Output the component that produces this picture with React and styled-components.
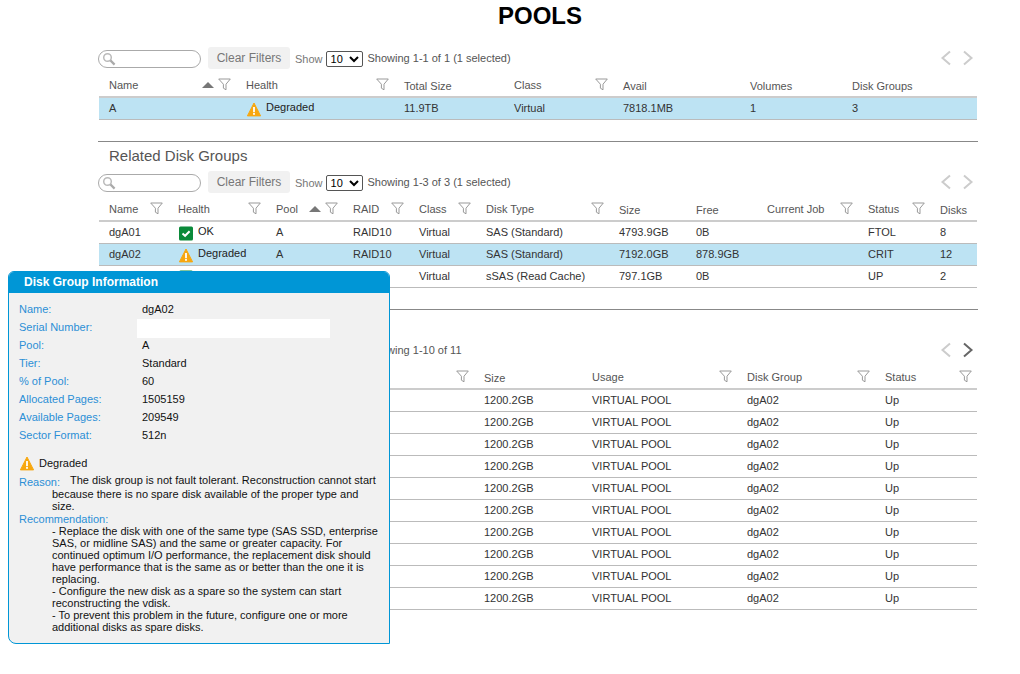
import React from 'react';
import styled, { createGlobalStyle } from 'styled-components';

const GlobalStyle = createGlobalStyle`
	html, body {
		margin: 0;
		padding: 0;
		background: #fff;
		font-family: "Liberation Sans", Arial, sans-serif;
		font-size: 11px;
	}
`;

const Page = styled.div`
	position: relative;
	width: 1020px;
	height: 674px;
	overflow: hidden;
`;

const Title = styled.h1`
	margin: 0;
	height: 32px;
	line-height: 32px;
	font-size: 24px;
	font-weight: bold;
	text-align: center;
	color: #000;
	margin-left: 60px;
`;

const Content = styled.div`
	margin-left: 98px;
	width: 880px;
	padding-top: 15px;
`;

const Section = styled.section`
	margin-top: 21px;
	border-top: 1px solid #888;
`;

const Heading = styled.h2`
	margin: 0;
	height: 29px;
	padding-left: 11px;
	line-height: 27px;
	font-size: 15px;
	font-weight: normal;
	color: #555;
`;

const Toolbar = styled.div`
	display: flex;
	align-items: center;
	height: 22px;
	margin-bottom: 6px;
	color: #555;
`;

const SearchBox = styled.div`
	display: flex;
	align-items: center;
	box-sizing: border-box;
	width: 103px;
	height: 18px;
	padding-left: 3px;
	margin-top: 2px;
	border: 1px solid #aaa;
	border-radius: 9px;
`;

const ClearButton = styled.button`
	height: 22px;
	width: 82px;
	margin-left: 7px;
	padding: 0;
	border: 0;
	border-radius: 3px;
	background: #f1f1f1;
	color: #777;
	font-family: inherit;
	font-size: 12px;
`;

const ShowLabel = styled.span`
	margin: 2px 3px 0 5px;
	color: #777;
`;

const PageSelect = styled.select`
	width: 37px;
	height: 16px;
	padding: 0;
	margin-top: 1px;
	border: 1px solid #555;
	border-radius: 2px;
	background: #fff;
	color: #000;
	font-family: inherit;
	font-size: 11px;
`;

const Summary = styled.span`
	margin-left: 5px;
	margin-bottom: 1px;
`;

const Pager = styled.div`
	display: flex;
	gap: 8px;
	margin-left: auto;
	margin-right: 3px;
`;

const Row = styled.div`
	display: grid;
	grid-template-columns: ${(p) => p.$cols};
	margin: 0 1px;
	height: 22px;
	box-sizing: border-box;
	border-bottom: 1px solid #bbb;
	background: ${(p) => (p.$selected ? '#bde3f3' : 'transparent')};
	color: #333;
`;

const HeaderRow = styled(Row)`
	height: 23px;
	border-bottom: 2px solid #ccc;
	color: #555;
`;

const Cell = styled.div`
	display: flex;
	align-items: center;
	padding-left: 10px;
	padding-bottom: 2px;
	white-space: nowrap;
	overflow: hidden;
`;

const HeadCell = styled(Cell)`
	padding-right: 5px;
	padding-bottom: ${(p) => (p.$low ? 0 : 2)}px;
`;

const HeadTools = styled.span`
	display: flex;
	align-items: center;
	gap: 4px;
	margin-left: auto;
`;

const SortArrow = styled.span`
	width: 0;
	height: 0;
	border-left: 6px solid transparent;
	border-right: 6px solid transparent;
	border-bottom: 6px solid #777;
`;

const HealthBox = styled.span`
	display: flex;
	align-items: center;
	gap: 4px;
	padding-top: 3px;
`;

const HealthText = styled.span`
	margin-bottom: 4px;
	color: #222;
`;

const Popup = styled.div`
	position: absolute;
	left: 8px;
	top: 271px;
	box-sizing: border-box;
	width: 382px;
	height: 373px;
	background: #f1f1f1;
	border: 1px solid #0096d6;
	border-radius: 6px 6px 0 8px;
	color: #111;
	overflow: hidden;
`;

const PopupTitle = styled.div`
	height: 21px;
	padding-left: 15px;
	line-height: 21px;
	background: #0096d6;
	color: #fff;
	font-size: 12px;
	font-weight: bold;
`;

const InfoList = styled.dl`
	display: grid;
	grid-template-columns: 123px 1fr;
	grid-auto-rows: 18px;
	margin: 7px 0 0 10px;
`;

const InfoLabel = styled.dt`
	line-height: 18px;
	color: #2b8fd6;
`;

const InfoValue = styled.dd`
	margin: 0;
	line-height: 18px;
`;

const Redacted = styled.dd`
	width: 193px;
	height: 19px;
	margin: 1px 0 0 -5px;
	background: #fff;
`;

const PopupHealth = styled.div`
	display: flex;
	align-items: center;
	gap: 4px;
	height: 18px;
	margin: 10px 0 2px 10px;
`;

const Details = styled.div`
	margin-left: 10px;
	width: 362px;
	line-height: 12px;
`;

const Reason = styled.div`
	padding-left: 33px;
`;

const ReasonLabel = styled.span`
	display: inline-block;
	width: 51px;
	margin-left: -33px;
	margin-bottom: 2px;
	color: #2b8fd6;
	position: relative;
	top: 2px;
`;

const RecommendLabel = styled.div`
	margin-top: 1px;
	color: #2b8fd6;
`;

const Warning = () => (
	<svg width="16" height="15" viewBox="0 0 16 15">
		<path d="M8 1 L14.6 13.9 H1.4 Z" fill="#f7a70f" stroke="#f7a70f" strokeLinejoin="round" />
		<rect x="7.1" y="5" width="1.8" height="5.2" fill="#fff" />
		<rect x="7.1" y="11" width="1.8" height="1.8" fill="#fff" />
	</svg>
);

const Ok = () => (
	<svg width="16" height="15" viewBox="0 0 16 15">
		<rect x="1" y="0.5" width="14" height="14" rx="1.5" fill="#0b8a3a" />
		<path d="M4.5 7.4 L7.1 9.8 L11.6 5.2" fill="none" stroke="#fff" strokeWidth="2" />
	</svg>
);

const Filter = () => (
	<svg width="13" height="13" viewBox="0 0 13 13">
		<path d="M0.7 1 H12.3 L8 6.2 V11.8 L5.4 10.2 V6.2 Z" fill="#fff" stroke="#999" strokeWidth="1" strokeLinejoin="round" />
	</svg>
);

const Magnifier = () => (
	<svg width="14" height="14" viewBox="0 0 14 14">
		<circle cx="5.5" cy="5.5" r="3.8" fill="none" stroke="#bbb" strokeWidth="1.5" />
		<path d="M8.4 8.4 L12.6 12.6" stroke="#aaa" strokeWidth="2.2" />
	</svg>
);

const Chevron = ({ dir, on }) => (
	<svg width="14" height="16" viewBox="0 0 14 16">
		<path
			d={dir === 'left' ? 'M11 1.5 L3.5 8 L11 14.5' : 'M3 1.5 L10.5 8 L3 14.5'}
			fill="none"
			stroke={on ? '#666' : '#ccc'}
			strokeWidth="2"
		/>
	</svg>
);

function TableToolbar({ summary, nextOn }) {
	return (
		<Toolbar>
			<SearchBox><Magnifier /></SearchBox>
			<ClearButton>Clear Filters</ClearButton>
			<ShowLabel>Show</ShowLabel>
			<PageSelect defaultValue="10" aria-label="Show">
				<option value="10">10</option>
				<option value="25">25</option>
			</PageSelect>
			<Summary>{summary}</Summary>
			<Pager>
				<Chevron dir="left" />
				<Chevron dir="right" on={nextOn} />
			</Pager>
		</Toolbar>
	);
}

function Health({ value }) {
	return (
		<HealthBox>
			{value === 'Degraded' ? <Warning /> : <Ok />}
			{value && <HealthText>{value}</HealthText>}
		</HealthBox>
	);
}

function Table({ cols, columns, rows }) {
	return (
		<div>
			<HeaderRow $cols={cols}>
				{columns.map((col) => (
					<HeadCell key={col.title} $low={col.low}>
						{col.title}
						{(col.sort || col.filter) && (
							<HeadTools>
								{col.sort && <SortArrow />}
								{col.filter && <Filter />}
							</HeadTools>
						)}
					</HeadCell>
				))}
			</HeaderRow>
			{rows.map((row, i) => (
				<Row key={i} $cols={cols} $selected={row.selected}>
					{row.cells.map((value, j) => (
						<Cell key={j}>
							{columns[j].title === 'Health' ? <Health value={value} /> : value}
						</Cell>
					))}
				</Row>
			))}
		</div>
	);
}

const poolCols = '137px 158px 110px 109px 127px 102px 135px';
const poolColumns = [
	{ title: 'Name', sort: true, filter: true },
	{ title: 'Health', filter: true },
	{ title: 'Total Size', low: true },
	{ title: 'Class', filter: true },
	{ title: 'Avail', low: true },
	{ title: 'Volumes', low: true },
	{ title: 'Disk Groups', low: true },
];
const poolRows = [
	{ selected: true, cells: ['A', 'Degraded', '11.9TB', 'Virtual', '7818.1MB', '1', '3'] },
];

const groupCols = '69px 98px 77px 66px 67px 133px 77px 71px 101px 72px 47px';
const groupColumns = [
	{ title: 'Name', filter: true },
	{ title: 'Health', filter: true },
	{ title: 'Pool', sort: true, filter: true },
	{ title: 'RAID', filter: true },
	{ title: 'Class', filter: true },
	{ title: 'Disk Type', filter: true },
	{ title: 'Size', low: true },
	{ title: 'Free', low: true },
	{ title: 'Current Job', filter: true },
	{ title: 'Status', filter: true },
	{ title: 'Disks', low: true },
];
// the third row's left cells sit behind the popup in the screenshot
const groupRows = [
	{ cells: ['dgA01', 'OK', 'A', 'RAID10', 'Virtual', 'SAS (Standard)', '4793.9GB', '0B', '', 'FTOL', '8'] },
	{ selected: true, cells: ['dgA02', 'Degraded', 'A', 'RAID10', 'Virtual', 'SAS (Standard)', '7192.0GB', '878.9GB', '', 'CRIT', '12'] },
	{ cells: ['', '', '', '', 'Virtual', 'sSAS (Read Cache)', '797.1GB', '0B', '', 'UP', '2'] },
];

const diskCols = '225px 150px 108px 155px 138px 102px';
const diskColumns = [
	{ title: ' ' },
	{ title: 'Description', filter: true },
	{ title: 'Size', low: true },
	{ title: 'Usage', filter: true },
	{ title: 'Disk Group', filter: true },
	{ title: 'Status', filter: true },
];
const diskRows = Array.from({ length: 10 }, () => ({
	cells: ['', '', '1200.2GB', 'VIRTUAL POOL', 'dgA02', 'Up'],
}));

const groupInfo = [
	['Name:', 'dgA02'],
	['Serial Number:', null],
	['Pool:', 'A'],
	['Tier:', 'Standard'],
	['% of Pool:', '60'],
	['Allocated Pages:', '1505159'],
	['Available Pages:', '209549'],
	['Sector Format:', '512n'],
];

function GroupPopup() {
	return (
		<Popup>
			<PopupTitle>Disk Group Information</PopupTitle>
			<InfoList>
				{groupInfo.map(([label, value]) => (
					<React.Fragment key={label}>
						<InfoLabel>{label}</InfoLabel>
						{value ? <InfoValue>{value}</InfoValue> : <Redacted />}
					</React.Fragment>
				))}
			</InfoList>
			<PopupHealth>
				<Warning />
				Degraded
			</PopupHealth>
			<Details>
				<Reason>
					<ReasonLabel>Reason:</ReasonLabel>
					The disk group is not fault tolerant. Reconstruction cannot start because there is no spare disk available of the proper type and size.
				</Reason>
				<RecommendLabel>Recommendation:</RecommendLabel>
				<Reason>
					<div>- Replace the disk with one of the same type (SAS SSD, enterprise SAS, or midline SAS) and the same or greater capacity. For continued optimum I/O performance, the replacement disk should have performance that is the same as or better than the one it is replacing.</div>
					<div>- Configure the new disk as a spare so the system can start reconstructing the vdisk.</div>
					<div>- To prevent this problem in the future, configure one or more additional disks as spare disks.</div>
				</Reason>
			</Details>
		</Popup>
	);
}

export default function App() {
	return (
		<Page>
			<GlobalStyle />
			<Title>POOLS</Title>
			<Content>
				<TableToolbar summary="Showing 1-1 of 1 (1 selected)" />
				<Table cols={poolCols} columns={poolColumns} rows={poolRows} />
				<Section>
					<Heading>Related Disk Groups</Heading>
					<TableToolbar summary="Showing 1-3 of 3 (1 selected)" />
					<Table cols={groupCols} columns={groupColumns} rows={groupRows} />
				</Section>
				<Section>
					<Heading />
					<TableToolbar summary="Showing 1-10 of 11" nextOn />
					<Table cols={diskCols} columns={diskColumns} rows={diskRows} />
				</Section>
			</Content>
			<GroupPopup />
		</Page>
	);
}
